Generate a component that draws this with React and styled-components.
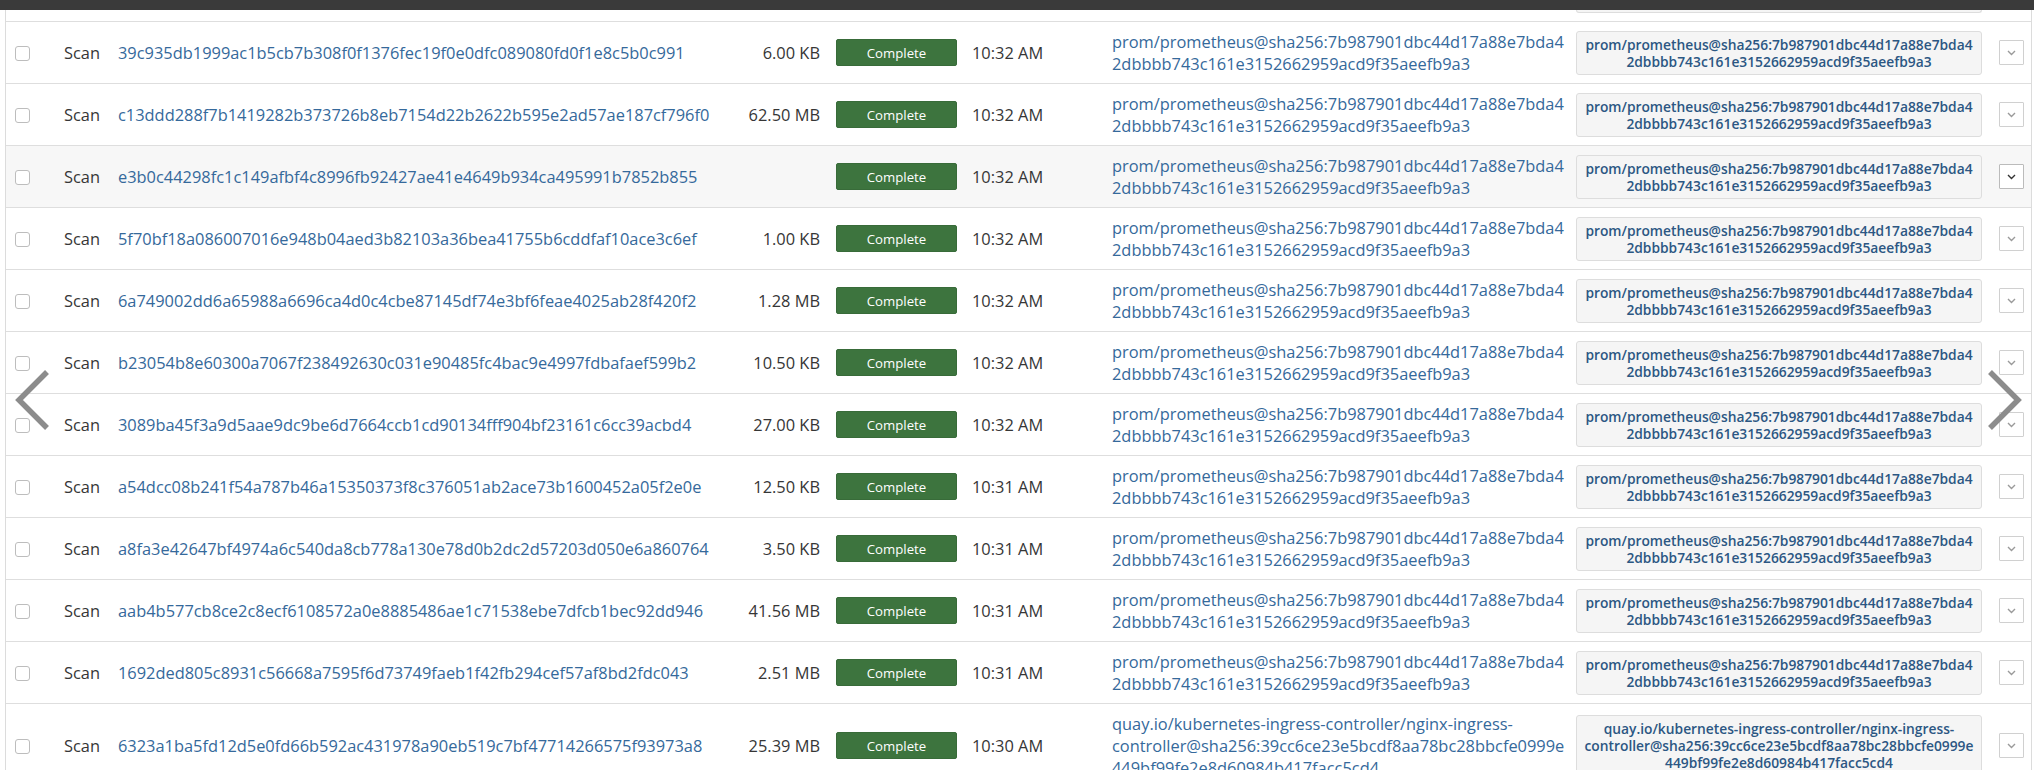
import React from 'react';
import styled, { createGlobalStyle } from 'styled-components';

const GlobalStyle = createGlobalStyle`
  html, body {
    margin: 0;
    padding: 0;
    background: #fff;
    overflow: hidden;
  }
  body {
    font-family: 'Open Sans', 'Noto Sans', sans-serif;
    color: #363636;
  }
`;

const PROM = [
  'prom/prometheus@sha256:7b987901dbc44d17a88e7bda4',
  '2dbbbb743c161e3152662959acd9f35aeefb9a3',
];
const QUAY = [
  'quay.io/kubernetes-ingress-controller/nginx-ingress-',
  'controller@sha256:39cc6ce23e5bcdf8aa78bc28bbcfe0999e',
  '449bf99fe2e8d60984b417facc5cd4',
];

const layers = [
  { id: '39c935db1999ac1b5cb7b308f0f1376fec19f0e0dfc089080fd0f1e8c5b0c991', size: '6.00 KB', time: '10:32 AM', image: PROM },
  { id: 'c13ddd288f7b1419282b373726b8eb7154d22b2622b595e2ad57ae187cf796f0', size: '62.50 MB', time: '10:32 AM', image: PROM },
  { id: 'e3b0c44298fc1c149afbf4c8996fb92427ae41e4649b934ca495991b7852b855', size: '', time: '10:32 AM', image: PROM, hover: true },
  { id: '5f70bf18a086007016e948b04aed3b82103a36bea41755b6cddfaf10ace3c6ef', size: '1.00 KB', time: '10:32 AM', image: PROM },
  { id: '6a749002dd6a65988a6696ca4d0c4cbe87145df74e3bf6feae4025ab28f420f2', size: '1.28 MB', time: '10:32 AM', image: PROM },
  { id: 'b23054b8e60300a7067f238492630c031e90485fc4bac9e4997fdbafaef599b2', size: '10.50 KB', time: '10:32 AM', image: PROM },
  { id: '3089ba45f3a9d5aae9dc9be6d7664ccb1cd90134fff904bf23161c6cc39acbd4', size: '27.00 KB', time: '10:32 AM', image: PROM },
  { id: 'a54dcc08b241f54a787b46a15350373f8c376051ab2ace73b1600452a05f2e0e', size: '12.50 KB', time: '10:31 AM', image: PROM },
  { id: 'a8fa3e42647bf4974a6c540da8cb778a130e78d0b2dc2d57203d050e6a860764', size: '3.50 KB', time: '10:31 AM', image: PROM },
  { id: 'aab4b577cb8ce2c8ecf6108572a0e8885486ae1c71538ebe7dfcb1bec92dd946', size: '41.56 MB', time: '10:31 AM', image: PROM },
  { id: '1692ded805c8931c56668a7595f6d73749faeb1f42fb294cef57af8bd2fdc043', size: '2.51 MB', time: '10:31 AM', image: PROM },
  { id: '6323a1ba5fd12d5e0fd66b592ac431978a90eb519c7bf47714266575f93973a8', size: '25.39 MB', time: '10:30 AM', image: QUAY },
];

const TopBar = styled.div`
  height: 10px;
  background: #3a3a3a;
`;

const Viewport = styled.div`
  position: relative;
  height: 760px;
  overflow: hidden;
  padding-left: 5px;
`;

const Table = styled.div`
  width: 2025px;
  border-left: 1px solid #dcdcdc;
  border-right: 1px solid #dcdcdc;
`;

// the bottom of the row scrolled out above the first visible one
const ScrolledRow = styled.div`
  display: grid;
  grid-template-columns: 1570px 406px 1fr;
  height: 11px;
  border-bottom: 1px solid #dedede;
`;

const BoxEdge = styled.div`
  grid-column: 2;
  height: 2px;
  background: #f5f5f5;
  border: 1px solid #dddddd;
  border-top: none;
  border-radius: 0 0 3px 3px;
`;

const Row = styled.div`
  display: grid;
  grid-template-columns: 49px 54px 630px 72px 152px 140px 464px 406px 1fr;
  align-items: center;
  min-height: 62px;
  box-sizing: border-box;
  padding: 8.5px 0 8.5px 9px;
  border-bottom: 1px solid #dedede;
  background: ${p => (p.$hover ? '#f7f7f7' : '#fff')};
  font-size: 16.4px;
  line-height: 22px;
`;

const Check = styled.input.attrs({ type: 'checkbox' })`
  appearance: none;
  margin: 2px 0 0;
  width: 15px;
  height: 15px;
  border: 1px solid #bdbdbd;
  border-radius: 3px;
  background: #fff;
`;

const Kind = styled.span`
  color: #363636;
`;

const LayerLink = styled.a`
  color: #35699b;
  text-decoration: none;
  white-space: nowrap;
`;

const Size = styled.span`
  justify-self: end;
  white-space: nowrap;
  color: #363636;
`;

const StatusCell = styled.div`
  padding-left: 16px;
`;

const StatusBadge = styled.span`
  display: flex;
  align-items: center;
  justify-content: center;
  width: 121px;
  height: 27px;
  box-sizing: border-box;
  background: #3d743e;
  border: 1px solid #386b39;
  border-radius: 2px;
  color: #fff;
  font-size: 13.2px;
`;

const Time = styled.span`
  white-space: nowrap;
  color: #363636;
`;

const ImageLink = styled.a`
  display: flex;
  flex-direction: column;
  color: #35699b;
  text-decoration: none;
  white-space: nowrap;
`;

const ImageBox = styled.div`
  display: flex;
  flex-direction: column;
  align-items: center;
  box-sizing: border-box;
  padding: 4px 6px;
  background: #f5f5f5;
  border: 1px solid #dddddd;
  border-radius: 3px;
  color: #2c5783;
  font-size: 13.8px;
  font-weight: 600;
  line-height: 17px;
  white-space: nowrap;
`;

const Toggle = styled.button`
  display: flex;
  align-items: center;
  justify-content: center;
  margin-left: 17px;
  width: 25px;
  height: 25px;
  padding: 0;
  background: #fff;
  border: 1px solid ${p => (p.$hover ? '#bbbbbb' : '#d0d0d0')};
  border-radius: 1px;
  color: ${p => (p.$hover ? '#333' : '#9a9a9a')};
`;

const Arrow = styled.svg`
  position: absolute;
  top: 356px;
  ${p => (p.$side === 'left' ? 'left: 14px;' : 'left: 1985px;')}
  width: 38px;
  height: 68px;
`;

const Chevron = () => (
  <svg width="9" height="6" viewBox="0 0 9 6">
    <path d="M1 1l3.5 3.5L8 1" fill="none" stroke="currentColor" strokeWidth="1.4" />
  </svg>
);

const LayerRow = ({ layer }) => (
  <Row $hover={layer.hover}>
    <Check />
    <Kind>Scan</Kind>
    <LayerLink href="#">{layer.id}</LayerLink>
    <Size>{layer.size}</Size>
    <StatusCell>
      <StatusBadge>Complete</StatusBadge>
    </StatusCell>
    <Time>{layer.time}</Time>
    <ImageLink href="#">
      {layer.image.map(line => (
        <span key={line}>{line}</span>
      ))}
    </ImageLink>
    <ImageBox>
      {layer.image.map(line => (
        <span key={line}>{line}</span>
      ))}
    </ImageBox>
    <Toggle $hover={layer.hover}>
      <Chevron />
    </Toggle>
  </Row>
);

export default function App() {
  return (
    <>
      <GlobalStyle />
      <TopBar />
      <Viewport>
        <Table>
          <ScrolledRow>
            <BoxEdge />
          </ScrolledRow>
          {layers.map(layer => (
            <LayerRow key={layer.id} layer={layer} />
          ))}
        </Table>
        <Arrow $side="left" viewBox="0 0 38 68">
          <polyline points="33,6 5,34 33,62" fill="none" stroke="#8c8c8c" strokeWidth="5.5" />
        </Arrow>
        <Arrow $side="right" viewBox="0 0 38 68">
          <polyline points="5,6 33,34 5,62" fill="none" stroke="#8c8c8c" strokeWidth="5.5" />
        </Arrow>
      </Viewport>
    </>
  );
}
